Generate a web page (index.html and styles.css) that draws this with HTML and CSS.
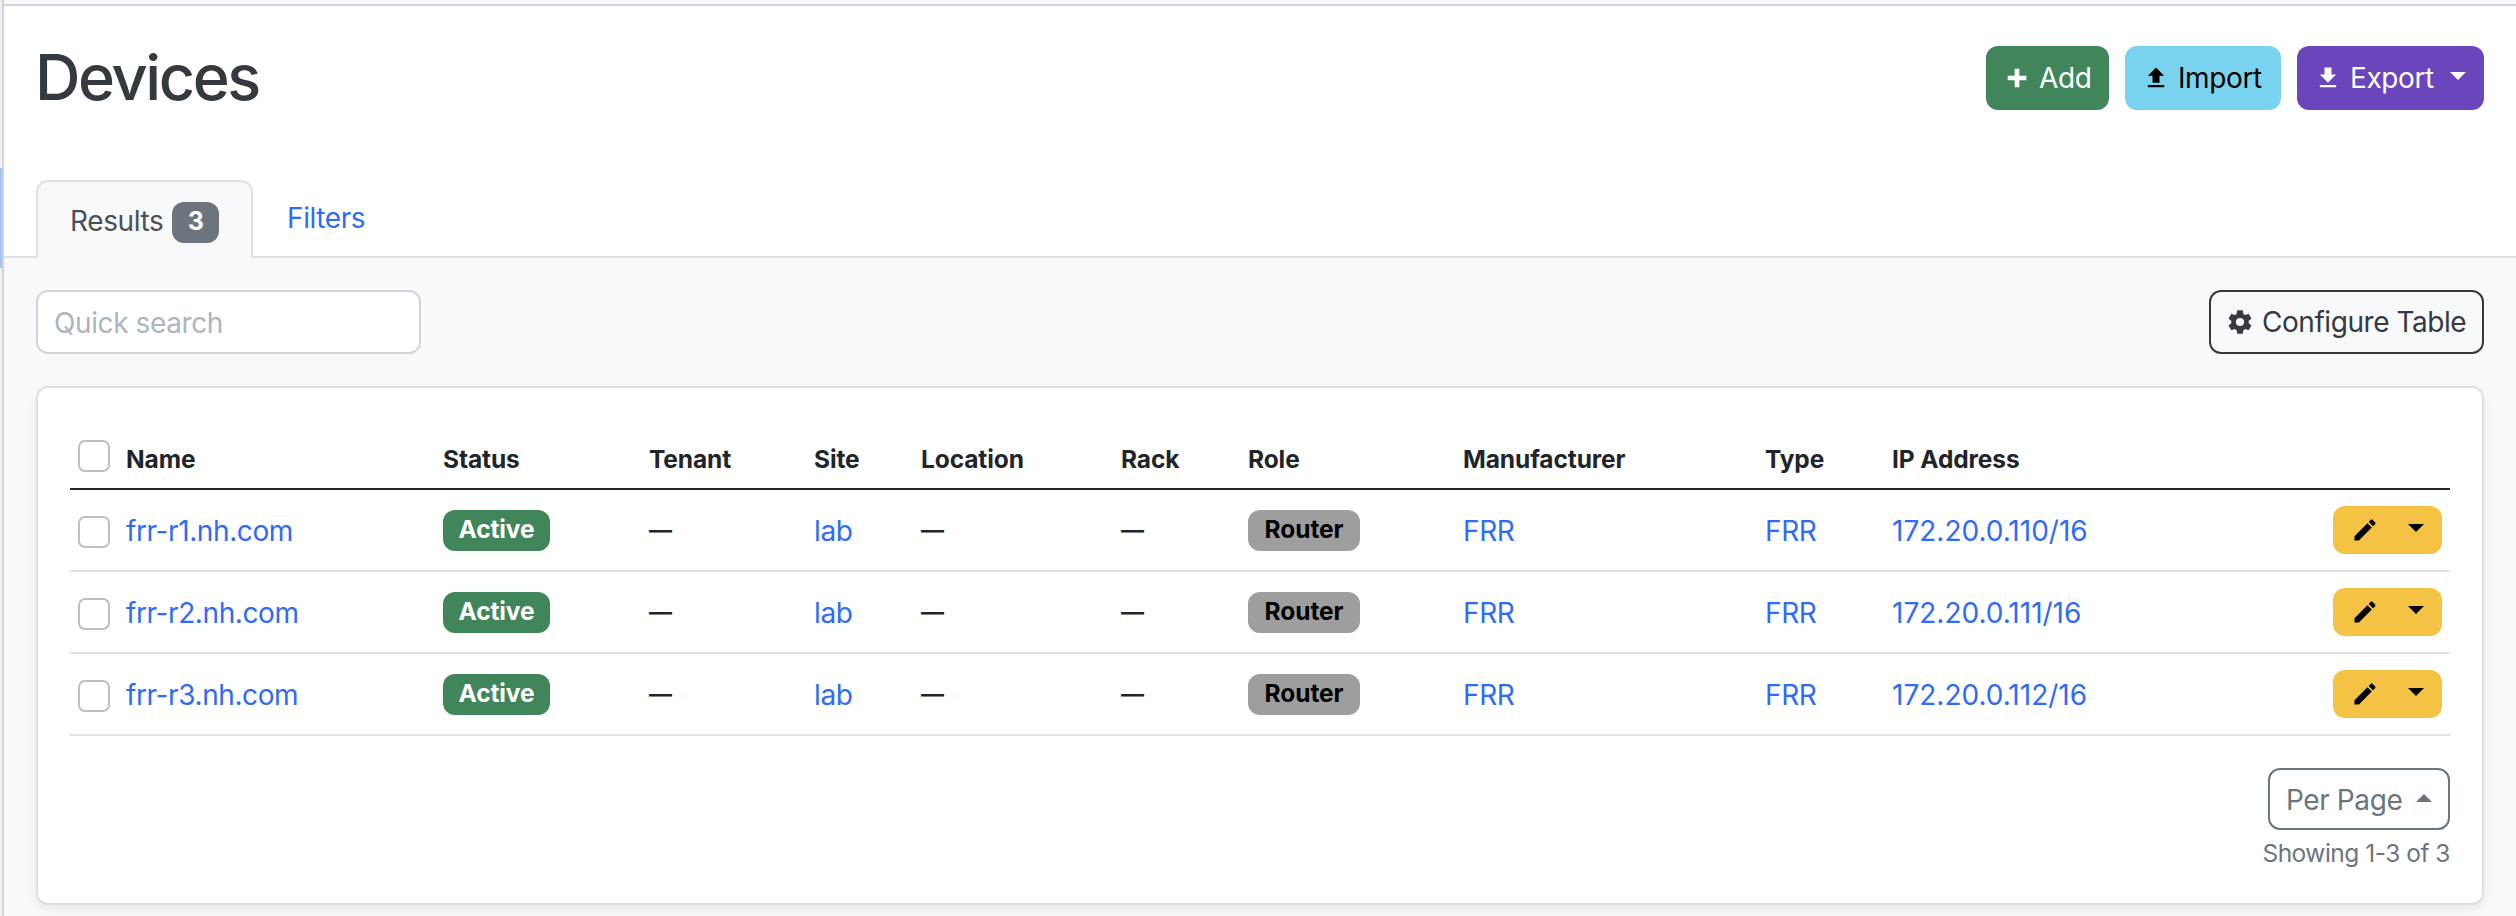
FILE: index.html
```html
<!DOCTYPE html>
<html lang="en">
<head>
<meta charset="utf-8">
<title>Devices</title>
<link rel="stylesheet" href="styles.css">
</head>
<body>
<svg class="defs" aria-hidden="true">
  <symbol id="plus" viewBox="0 0 24 24"><path d="M20 14H14V20H10V14H4V10H10V4H14V10H20V14Z"/></symbol>
  <symbol id="upload" viewBox="0 0 24 24"><path d="M9,16V10H5L12,3L19,10H15V16H9M5,20V18H19V20H5Z"/></symbol>
  <symbol id="download" viewBox="0 0 24 24"><path d="M5,20H19V18H5M19,9H15V3H9V9H5L12,16L19,9Z"/></symbol>
  <symbol id="pencil" viewBox="0 0 24 24"><path d="M20.71,7.04C21.1,6.65 21.1,6 20.71,5.63L18.37,3.29C18,2.9 17.35,2.9 16.96,3.29L15.12,5.12L18.87,8.87M3,17.25V21H6.75L17.81,9.93L14.06,6.18L3,17.25Z"/></symbol>
  <symbol id="cog" viewBox="0 0 24 24"><path d="M12,15.5A3.5,3.5 0 0,1 8.5,12A3.5,3.5 0 0,1 12,8.5A3.5,3.5 0 0,1 15.5,12A3.5,3.5 0 0,1 12,15.5M19.43,12.97C19.47,12.65 19.5,12.33 19.5,12C19.5,11.67 19.47,11.34 19.43,11L21.54,9.37C21.73,9.22 21.78,8.95 21.66,8.73L19.66,5.27C19.54,5.05 19.27,4.96 19.05,5.05L16.56,6.05C16.04,5.66 15.5,5.32 14.87,5.07L14.5,2.42C14.46,2.18 14.25,2 14,2H10C9.75,2 9.54,2.18 9.5,2.42L9.13,5.07C8.5,5.32 7.96,5.66 7.44,6.05L4.95,5.05C4.73,4.96 4.46,5.05 4.34,5.27L2.34,8.73C2.21,8.95 2.27,9.22 2.46,9.37L4.57,11C4.53,11.34 4.5,11.67 4.5,12C4.5,12.33 4.53,12.65 4.57,12.97L2.46,14.63C2.27,14.78 2.21,15.05 2.34,15.27L4.34,18.73C4.46,18.95 4.73,19.03 4.95,18.95L7.44,17.94C7.96,18.34 8.5,18.68 9.13,18.93L9.5,21.58C9.54,21.82 9.75,22 10,22H14C14.25,22 14.46,21.82 14.5,21.58L14.87,18.93C15.5,18.67 16.04,18.34 16.56,17.94L19.05,18.95C19.27,19.03 19.54,18.95 19.66,18.73L21.66,15.27C21.78,15.05 21.73,14.78 21.54,14.63L19.43,12.97Z"/></symbol>
</svg>
<div class="app">
  <aside class="rail"><div class="rail-active"></div></aside>
  <main class="main">
    <header class="header">
      <h1 class="title">Devices</h1>
      <div class="actions">
        <button class="btn btn-add"><svg class="icon"><use href="#plus"/></svg><span>Add</span></button>
        <button class="btn btn-import"><svg class="icon"><use href="#upload"/></svg><span>Import</span></button>
        <button class="btn btn-export"><svg class="icon"><use href="#download"/></svg><span>Export</span><i class="caret"></i></button>
      </div>
    </header>
    <nav class="tabs">
      <a class="tab active"><span>Results</span><b class="count">3</b></a>
      <a class="tab link"><span>Filters</span></a>
    </nav>
    <section class="content">
      <div class="toolbar">
        <input class="search" type="text" placeholder="Quick search">
        <button class="btn btn-configure"><svg class="icon"><use href="#cog"/></svg><span>Configure Table</span></button>
      </div>
      <div class="card">
        <table class="table">
          <colgroup><col class="c-check"><col class="c-name"><col class="c-status"><col class="c-tenant"><col class="c-site"><col class="c-location"><col class="c-rack"><col class="c-role"><col class="c-manufacturer"><col class="c-type"><col class="c-ip"><col></colgroup>
          <thead>
            <tr><th><i class="check"></i></th><th>Name</th><th>Status</th><th>Tenant</th><th>Site</th><th>Location</th><th>Rack</th><th>Role</th><th>Manufacturer</th><th>Type</th><th>IP Address</th><th></th></tr>
          </thead>
          <tbody>
            <tr><td><i class="check"></i></td><td><a class="host">frr-r1.nh.com</a></td><td><b class="badge green">Active</b></td><td><span class="none">—</span></td><td><a>lab</a></td><td><span class="none">—</span></td><td><span class="none">—</span></td><td><b class="badge gray">Router</b></td><td><a>FRR</a></td><td><a>FRR</a></td><td><a class="ip">172.20.0.110/16</a></td><td><div class="edit"><svg class="icon"><use href="#pencil"/></svg><i class="caret"></i></div></td></tr>
            <tr><td><i class="check"></i></td><td><a class="host">frr-r2.nh.com</a></td><td><b class="badge green">Active</b></td><td><span class="none">—</span></td><td><a>lab</a></td><td><span class="none">—</span></td><td><span class="none">—</span></td><td><b class="badge gray">Router</b></td><td><a>FRR</a></td><td><a>FRR</a></td><td><a class="ip">172.20.0.111/16</a></td><td><div class="edit"><svg class="icon"><use href="#pencil"/></svg><i class="caret"></i></div></td></tr>
            <tr><td><i class="check"></i></td><td><a class="host">frr-r3.nh.com</a></td><td><b class="badge green">Active</b></td><td><span class="none">—</span></td><td><a>lab</a></td><td><span class="none">—</span></td><td><span class="none">—</span></td><td><b class="badge gray">Router</b></td><td><a>FRR</a></td><td><a>FRR</a></td><td><a class="ip">172.20.0.112/16</a></td><td><div class="edit"><svg class="icon"><use href="#pencil"/></svg><i class="caret"></i></div></td></tr>
          </tbody>
        </table>
        <div class="pager">
          <button class="btn btn-page"><span>Per Page</span><i class="caret up"></i></button>
          <small class="showing">Showing 1-3 of 3</small>
        </div>
      </div>
    </section>
  </main>
</div>
</body>
</html>
```
FILE: styles.css
```css
* { box-sizing: border-box; }
body {
  margin: 0;
  overflow: hidden;
  background: #f8f9fb;
  color: #212529;
  font: 430 28px/42px Inter, "Liberation Sans", sans-serif;
  letter-spacing: -0.4px;
}
.defs { display: none; }
.app { display: flex; height: 916px; }
.rail { width: 4px; background: #eff1f4; border-right: 2px solid #ced4da; padding-top: 168px; flex: none; }
.rail-active { width: 2px; height: 100px; background: #9ec5fe; }
.main { flex: 1; border-top: 4px solid #f8f9fa; display: flex; flex-direction: column; }
.header {
  display: flex;
  justify-content: space-between;
  align-items: flex-start;
  height: 176px;
  padding: 40px 32px 0 31px;
  border-top: 2px solid #ced4da;
  background: #fff;
}
.title { margin: -7px 0 0; font-size: 63px; line-height: 76px; font-weight: 540; letter-spacing: -2.4px; color: #343a40; }
.actions { display: flex; gap: 16px; }
.icon { width: 28px; height: 28px; fill: currentColor; flex: none; display: block; }
.caret {
  width: 0;
  border: 8px solid transparent;
  border-top-color: currentColor;
  border-bottom: 0;
}
.caret.up { border-top: 0; border-bottom: 8px solid currentColor; }
.btn {
  display: flex;
  align-items: center;
  height: 64px;
  padding: 0 15px;
  border: 2px solid transparent;
  border-radius: 12px;
  background: none;
  font: inherit;
  letter-spacing: inherit;
  white-space: nowrap;
}
.btn .icon { margin-right: 8px; }
.btn-add { width: 123px; background: #41865a; color: #fff; }
.btn-import { width: 156px; background: #7ad3ee; color: #000; }
.btn-export { width: 187px; background: #6a45bb; color: #fff; }
.btn-export .caret { margin: -4px 0 0 16px; }
.tabs { display: flex; height: 78px; padding-left: 32px; background: #fff; border-bottom: 2px solid #dee2e6; }
.tab { display: flex; padding: 17px 34px 0; }
.tab.active {
  width: 217px;
  height: 78px;
  padding: 20px 0 0 32px;
  border: 2px solid #dee2e6;
  border-bottom: 0;
  border-radius: 12px 12px 0 0;
  background: #f8f9fb;
  color: #495057;
}
.tab.active span { width: 95px; margin-top: -2px; }
.count {
  width: 47px;
  height: 41px;
  margin-left: 7px;
  border-radius: 12px;
  background: #6c757d;
  color: #fff;
  font-size: 25px;
  line-height: 39px;
  text-align: center;
}
.link, a { color: #2f6bf6; }
.content { padding: 32px 32px 0; }
.toolbar { display: flex; justify-content: space-between; }
.search {
  width: 385px;
  height: 64px;
  padding: 1px 16px 0;
  border: 2px solid #ced4da;
  border-radius: 12px;
  background: #fff;
  font: inherit;
  letter-spacing: inherit;
}
.search::placeholder { color: #adb5bd; opacity: 1; }
.btn-configure { width: 275px; border-color: #343a40; color: #343a40; letter-spacing: -0.45px; }
.card {
  height: 519px;
  margin-top: 32px;
  padding: 32px;
  border: 2px solid #dfdfdf;
  border-radius: 12px;
  background: #fff;
  box-shadow: 0 4px 8px rgba(0, 0, 0, .075);
}
.table { width: 2380px; table-layout: fixed; border-collapse: separate; border-spacing: 0; }
th, td { padding: 0; text-align: left; vertical-align: middle; }
th { height: 70px; padding-top: 10px; border-bottom: 2px solid #212529; font-size: 24.5px; font-weight: 700; letter-spacing: -0.1px; }
td { height: 82px; padding-top: 2px; border-bottom: 2px solid #dee2e6; }
.check { display: block; width: 32px; height: 32px; margin-left: 8px; border: 2px solid #bfbfbf; border-radius: 7px; }
th .check { margin-top: -7px; }
td .check { margin-top: 2px; }
.c-check { width: 56px; }
.c-name { width: 317px; }
.c-status { width: 206px; }
.c-tenant { width: 165px; }
.c-site { width: 107px; }
.c-location { width: 200px; }
.c-rack { width: 127px; }
.c-role { width: 215px; }
.c-manufacturer { width: 302px; }
.c-type { width: 127px; }
.c-ip { width: 230px; }
.none { display: block; margin-top: -3px; font-size: 23px; font-weight: 600; line-height: 42px; letter-spacing: 0; }
.ip { letter-spacing: 0; }
.badge { display: block; height: 41px; margin-top: -2px; border-radius: 12px; font-size: 24.5px; line-height: 39px; text-align: center; letter-spacing: -0.1px; }
.green { width: 107px; background: #41865a; color: #fff; }
.gray { width: 112px; background: #9e9e9e; color: #000; }
.edit {
  display: flex;
  align-items: flex-start;
  width: 109px;
  height: 48px;
  margin-top: -2px;
  margin-left: auto;
  margin-right: 8px;
  padding: 10px 0 0 18px;
  border-radius: 12px;
  background: #f5c344;
  color: #000;
}
.edit .caret { margin: 8px 0 0 29px; }
.pager { display: flex; flex-direction: column; align-items: flex-end; margin-top: 32px; }
.btn-page { width: 182px; height: 62px; padding-left: 16px; padding-top: 2px; border-color: #6c757d; color: #6c757d; }
.btn-page .caret { margin: -4px 0 0 14px; }
.showing { margin-top: 5px; font-size: 24.5px; line-height: 37px; color: #6c757d; letter-spacing: -0.5px; }
```
